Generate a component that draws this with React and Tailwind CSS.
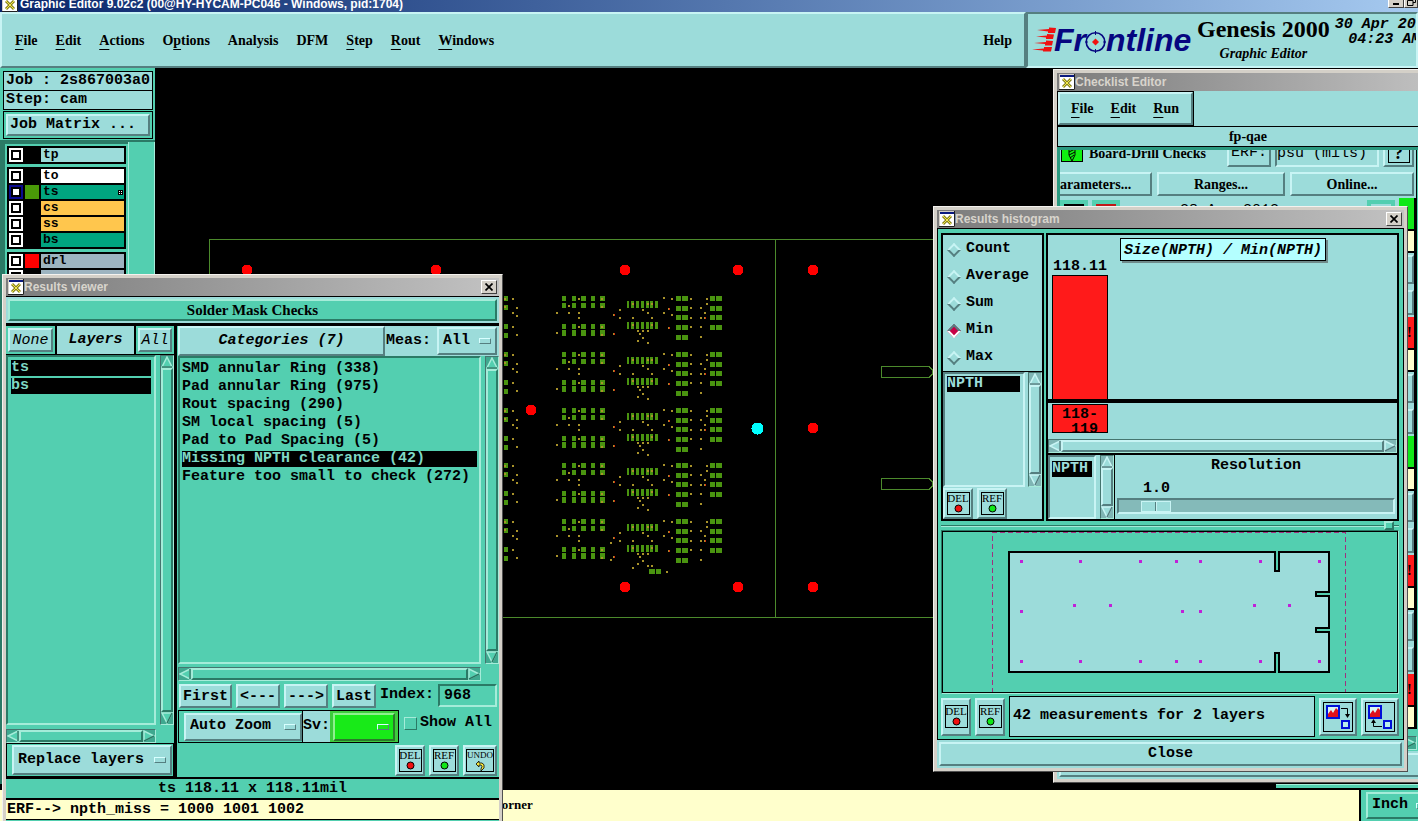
import React, { useState } from 'react';

const mono = "font-['Liberation_Mono','DejaVu_Sans_Mono',monospace]";
const serif = "font-['Liberation_Serif',serif]";
const sans = "font-['Liberation_Sans',sans-serif]";

// Motif style bevels
const raisedBlue = 'border-2 border-t-[#c8f4f4] border-l-[#c8f4f4] border-r-[#557f80] border-b-[#557f80] bg-[#9cdcda]';
const sunkenBlue = 'border-2 border-t-[#557f80] border-l-[#557f80] border-r-[#c8f4f4] border-b-[#c8f4f4] bg-[#9cdcda]';
const raisedGreen = 'border-2 border-t-[#a5ecd9] border-l-[#a5ecd9] border-r-[#2b7a66] border-b-[#2b7a66] bg-[#53cfb0]';
const sunkenGreen = 'border-2 border-t-[#2b7a66] border-l-[#2b7a66] border-r-[#a5ecd9] border-b-[#a5ecd9] bg-[#53cfb0]';

const mainMenu = [
  { label: 'File', at: 0 },
  { label: 'Edit', at: 0 },
  { label: 'Actions', at: 0 },
  { label: 'Options', at: 1 },
  { label: 'Analysis', at: -1 },
  { label: 'DFM', at: -1 },
  { label: 'Step', at: 0 },
  { label: 'Rout', at: 0 },
  { label: 'Windows', at: 0 },
];

const layerGroups = [
  [{ name: 'tp', bg: 'bg-[#9cdcda]', swatch: 'bg-black' }],
  [
    { name: 'to', bg: 'bg-white', swatch: 'bg-black' },
    { name: 'ts', bg: 'bg-[#00a580]', swatch: 'bg-[#4a9a08]', active: true },
    { name: 'cs', bg: 'bg-[#ffc64d]', swatch: 'bg-black' },
    { name: 'ss', bg: 'bg-[#ffc64d]', swatch: 'bg-black' },
    { name: 'bs', bg: 'bg-[#00a580]', swatch: 'bg-black' },
  ],
  [
    { name: 'drl', bg: 'bg-[#9db4c0]', swatch: 'bg-[#ff0000]' },
    { name: '', bg: 'bg-[#9db4c0]', swatch: 'bg-black' },
  ],
];

const categories = [
  'SMD annular Ring (338)',
  'Pad annular Ring (975)',
  'Rout spacing (290)',
  'SM local spacing (5)',
  'Pad to Pad Spacing (5)',
  'Missing NPTH clearance (42)',
  'Feature too small to check (272)',
];

const stats = ['Count', 'Average', 'Sum', 'Min', 'Max'];

// --- Datos del dibujo ---
const blockOffsets = [0, 56, 112, 167, 223];
const pads = [
  ...[[562, 4], [572, 4], [581, 5], [591, 4], [600, 5]].flatMap(([x, w]) => [
    [x, 296, w, 5], [x, 303, w, 5], [x, 324, w, 5], [x, 330, w, 6],
  ]),
  ...[[627, 2], [631, 3], [636, 3], [641, 3], [646, 3], [650, 3], [655, 3]].flatMap(([x, w]) => [
    [x, 301, w, 7], [x, 322, w, 7],
  ]),
  ...[296, 306, 315, 325, 335].flatMap((y) => [[676, y, 5, 5], [682, y, 6, 5]]),
  ...[296, 306, 315, 325].flatMap((y) => [[710, y, 5, 5], [716, y, 6, 5]]),
  [504, 296, 4, 5], [504, 305, 4, 5], [504, 324, 4, 5], [504, 333, 4, 5],
];
const vias = [
  [557, 313], [569, 306], [569, 313], [579, 299], [579, 313], [579, 318], [579, 327], [557, 333],
  [602, 299], [602, 307], [602, 327], [602, 335],
  [620, 310], [620, 318], [633, 318], [643, 310], [648, 313], [652, 318], [633, 304], [648, 304],
  [652, 304], [633, 325], [652, 325], [638, 331], [643, 331], [648, 331], [640, 334], [643, 338],
  [638, 341], [648, 343], [664, 298], [672, 299], [664, 313], [672, 315], [691, 299], [691, 308],
  [691, 318], [691, 327], [701, 308], [701, 318], [701, 327], [701, 337], [707, 299], [707, 304],
  [705, 313], [513, 299], [517, 308], [513, 313], [517, 316], [513, 327], [517, 335], [505, 299], [505, 307],
  [669, 309], [669, 328], [614, 315], [614, 334], [705, 318],
];
const hotVias = [[670, 309], [670, 328], [615, 315], [615, 334], [706, 318]];
const holes = [
  [247, 270], [436, 270], [625, 270], [738, 270], [813, 270], [531, 410],
  [813, 428], [625, 587], [738, 587], [813, 587],
];
const previewDots = [
  ...[1021, 1081, 1141, 1177, 1201, 1261, 1321].flatMap((x) => [[x, 561], [x, 661]]),
  [1021, 611], [1075, 605], [1111, 605], [1183, 611], [1201, 611], [1255, 605], [1291, 605],
];

const Mnemonic = ({ label, at }) => {
  if (at < 0) return label;
  return (
    <>
      {label.slice(0, at)}
      <span className="underline decoration-1 underline-offset-[4px]">{label[at]}</span>
      {label.slice(at + 1)}
    </>
  );
};

const XIcon = () => (
  <svg width="16" height="16" viewBox="0 0 16 16" className="shrink-0">
    <rect width="16" height="16" fill="#d4d0c8" />
    <rect x="1" y="1" width="14" height="14" fill="#fff" />
    <rect x="1" y="1" width="14" height="2" fill="#0a1a80" />
    <path d="M4 5L12 13M12 5L4 13" stroke="#8a8420" strokeWidth="3" />
    <path d="M4 5L12 13M12 5L4 13" stroke="#f2e94a" strokeWidth="1" />
    <path d="M0 15.5H15.5V0" fill="none" stroke="#222" />
  </svg>
);

const CloseBox = () => (
  <button aria-label="Close window" className="flex h-[14px] w-4 items-center justify-center border border-t-white border-l-white border-r-[#404040] border-b-[#404040] bg-[#d4d0c8]">
    <svg width="8" height="8" viewBox="0 0 8 8"><path d="M0.5 0.5L7.5 7.5M7.5 0.5L0.5 7.5" stroke="#000" strokeWidth="1.7" /></svg>
  </button>
);

const Win = ({ title, closable, place, children }) => (
  <section className={`absolute border border-t-[#f4f2ee] border-l-[#f4f2ee] border-r-[#505050] border-b-[#505050] bg-[#d4d0c8] p-[3px] ${place}`}>
    <header className={`flex h-[18px] items-center bg-linear-to-r from-[#7c7c7c] to-[#c2c2c2] pr-[2px] pl-[2px] ${sans}`}>
      <XIcon />
      <h2 className="flex-1 text-xs font-bold text-[#d8d4cc]">{title}</h2>
      {closable && <CloseBox />}
    </header>
    {children}
  </section>
);

const arrows = {
  up: 'M6 1L11 11H1Z',
  down: 'M6 11L1 1H11Z',
  left: 'M1 6L11 1V11Z',
  right: 'M11 6L1 1V11Z',
};
const arrowShade = {
  up: 'M11 11H1',
  down: 'M11 1L6 11',
  left: 'M11 1V11',
  right: 'M11 6L1 11',
};
const Arrow = ({ dir, green }) => (
  <svg width="12" height="12" viewBox="0 0 12 12" className="shrink-0">
    <path d={arrows[dir]} fill={green ? '#53cfb0' : '#9cdcda'} stroke={green ? '#a5ecd9' : '#c8f4f4'} strokeWidth="1.5" />
    <path d={arrowShade[dir]} stroke={green ? '#2b7a66' : '#557f80'} strokeWidth="1.5" />
  </svg>
);

const ScrollBar = ({ horizontal, green }) => (
  <div
    className={`flex shrink-0 ${horizontal ? 'h-[14px] flex-row' : 'w-[14px] flex-col'} border border-t-[#45756f] border-l-[#45756f] border-r-[#a5ecd9] border-b-[#a5ecd9] ${green ? 'bg-[#3fa88f]' : 'bg-[#7fb5b4]'}`}
  >
    <Arrow dir={horizontal ? 'left' : 'up'} green={green} />
    <div className={`flex-1 ${green ? raisedGreen : raisedBlue}`} />
    <Arrow dir={horizontal ? 'right' : 'down'} green={green} />
  </div>
);

const OptionMenu = ({ id, options, look, label }) => (
  <div className={`flex items-center gap-1 pr-1 pl-1 ${look}`}>
    <select id={id} aria-label={label} className="min-w-0 flex-1 appearance-none bg-transparent font-bold outline-none">
      {options.map((o) => <option key={o}>{o}</option>)}
    </select>
    <span className="h-[6px] w-3 shrink-0 border border-t-[#d8ffff] border-l-[#d8ffff] border-r-[#557f80] border-b-[#557f80]" />
  </div>
);

const UtilButton = ({ text, dot, size = 'h-[31px] w-[30px]' }) => (
  <button aria-label={text} className={`flex items-center justify-center ${raisedBlue} ${size}`}>
    <span className={`flex h-[23px] w-[23px] flex-col items-center border border-black text-[11px] leading-[11px] font-normal ${serif}`}>
      <span>{text}</span>
      <svg width="9" height="9" viewBox="0 0 9 9"><circle cx="4.5" cy="4.5" r="3.5" fill={dot} stroke="#000" /></svg>
    </span>
  </button>
);

const UndoButton = () => (
  <button aria-label="Undo" className={`flex h-[31px] w-[34px] items-center justify-center ${raisedBlue}`}>
    <span className={`flex h-[23px] w-[28px] flex-col items-center border border-black text-[9px] leading-[11px] font-normal ${serif}`}>
      <span>UNDO</span>
      <svg width="12" height="10" viewBox="0 0 12 10">
        <path d="M2 3L5 0V2H8Q11 3 10 7L7 10V8Q9 5 7 4H5V6Z" fill="#f5e63c" stroke="#000" strokeWidth="0.8" />
      </svg>
    </span>
  </button>
);

const ChartButton = ({ back }) => (
  <button aria-label={back ? 'Previous layer' : 'Next layer'} className={`flex h-[38px] w-[38px] items-center justify-center ${raisedBlue}`}>
    <svg width="30" height="30" viewBox="0 0 30 30">
      <rect x="0.5" y="0.5" width="29" height="29" fill="#9cdcda" stroke="#000" />
      <rect x="4" y="4" width="12" height="12" fill="#d8f4f4" stroke="#0010d8" strokeWidth="2" />
      <path d="M5 15V12L8 8L10 11L13 6L15 8V15Z" fill="#e0101c" />
      <rect x="19" y="19" width="7" height="7" fill="#b8ecec" stroke="#0010d8" strokeWidth="2" />
      {back ? (
        <>
          <path d="M17 24.5H8.5V19" fill="none" stroke="#000" />
          <path d="M8.5 17L11 21H6Z" />
        </>
      ) : (
        <>
          <path d="M18 6.5H24.5V13" fill="none" stroke="#000" />
          <path d="M24.5 16L27 12H22Z" />
        </>
      )}
    </svg>
  </button>
);

const Logo = () => (
  <svg width="160" height="38" viewBox="1032 22 160 38" className="shrink-0" role="img">
    <g fill="#f01010">
      <path d="M1037 30L1049 29V27.5L1056 28L1055 33H1048V31.5Z" />
      <path d="M1036 36.5L1047 35.5V34L1054 34.5L1053 39H1046V37.5Z" />
      <path d="M1034 43L1046 42V40.5L1053 41L1052 45.5H1045V44Z" />
      <path d="M1032 49.5L1044 48.5V47L1052 47L1051 51.5H1043V50.5Z" />
    </g>
    <g className={`${sans} text-[32px] font-bold italic`} fill="#060680">
      <text x="1054" y="51">Fr</text>
      <text x="1106" y="51">ntline</text>
    </g>
    <circle cx="1095.5" cy="42" r="9.3" fill="none" stroke="#060680" strokeWidth="1.6" />
    <path d="M1095.5 38.5L1099 42L1095.5 45.5L1092 42Z" fill="#f01010" />
    <path d="M1095.5 31V35M1095.5 49V53M1085 42H1088M1103 42H1106" stroke="#060680" strokeWidth="1" />
  </svg>
);

const BoardCanvas = () => (
  <svg className="h-full min-w-0 flex-1 bg-black" shapeRendering="crispEdges">
    {/* page coordinates, moved to the canvas corner */}
    <g transform="translate(-155 -68)">
      <g fill="none" stroke="#4c8a2c">
        <path d="M1300 239.5H209.5V617.5H1300" />
        <path d="M775.5 239.5V617.5" />
        <path d="M881.5 366.5H929L932.5 370V374L929 377.5H881.5Z" />
        <path d="M881.5 478.5H929L932.5 482V486L929 489.5H881.5Z" />
      </g>
      {blockOffsets.map((dy) => (
        <g key={dy} transform={`translate(0 ${dy})`}>
          {pads.map(([x, y, w, h]) => <rect key={`${x}-${y}`} x={x} y={y} width={w} height={h} fill="#4a9410" />)}
          {vias.map(([x, y]) => <rect key={`${x}-${y}`} x={x - 1} y={y - 1} width="2" height="2" fill="#a8922a" />)}
          {hotVias.map(([x, y]) => <rect key={`${x}-${y}`} x={x - 1} y={y - 1} width="1" height="2" fill="#d83010" />)}
        </g>
      ))}
      <path d="M649 569h6v5h-6zM656 569h5v5h-5z" fill="#4a9410" />
      <path d="M666 571h2v2h-2zM632 567h2v2h-2zM610 542h2v2h-2zM610 559h2v2h-2zM651 565h2v2h-2z" fill="#a8922a" />
      {holes.map(([x, y]) => <circle key={`${x}-${y}`} cx={x} cy={y} r="5.5" fill="#ff0000" />)}
      <circle cx="757.5" cy="428.5" r="6" fill="#00ffff" />
    </g>
  </svg>
);

const LayerPanel = () => (
  <aside className={`flex w-[155px] shrink-0 flex-col bg-[#53cfb0] pt-[3px] text-[15px] font-bold ${mono}`}>
    <div className="mr-[2px] ml-[3px] border border-black bg-[#9cdcda] pl-[2px] leading-[18px] whitespace-pre">Job : 2s867003a0</div>
    <div className="mr-[2px] ml-[3px] border border-t-0 border-black bg-[#9cdcda] pl-[2px] leading-[18px]">Step: cam</div>
    <div className="mt-[1px] mr-[2px] ml-[3px] border border-black p-[2px]">
      <button className={`block w-full pl-[2px] text-left leading-[18px] ${raisedBlue}`}>Job Matrix ...</button>
    </div>
    <div className="mt-[1px] flex min-h-0 flex-1 overflow-hidden border-t-2 border-[#2b7a66]">
      <div className="flex w-[128px] flex-col gap-[3px] border-t-2 border-l-[5px] border-[#2b7a66] p-[2px] text-[13px]">
        {layerGroups.map((group, i) => (
          <div key={i} className="flex flex-col bg-black pt-[2px]">
            {group.map((layer) => (
              <div key={layer.name} className="flex h-4 gap-[2px] px-[2px] pb-[2px]">
                <input
                  type="checkbox"
                  aria-label={layer.name || 'layer'}
                  className={`h-[14px] w-[14px] appearance-none border-2 bg-white ring-2 ring-black ring-inset ${layer.active ? 'border-[#0a0a90]' : 'border-white'}`}
                />
                <span className={`w-[14px] ${layer.swatch}`} />
                <button className={`flex flex-1 items-center justify-between pr-[1px] pl-[2px] leading-[14px] ${layer.bg}`}>
                  {layer.name}
                  {layer.active && (
                    <svg width="5" height="5" viewBox="0 0 5 5" shapeRendering="crispEdges">
                      <rect width="5" height="5" />
                      <path d="M1 1h1v1h-1zM3 1h1v1h-1zM1 3h1v1h-1zM3 3h1v1h-1z" fill="#fff" />
                    </svg>
                  )}
                </button>
              </div>
            ))}
          </div>
        ))}
      </div>
      <div className="flex-1 border-x border-[#a5ecd9]" />
    </div>
  </aside>
);

const ChecklistEditor = () => (
  <Win title="Checklist Editor" place="top-[69px] left-[1053px] w-[390px]">
    <div className={`flex h-[688px] flex-col bg-[#9cdcda] text-[14px] font-bold ${serif}`}>
      <nav className="w-[137px] border border-black">
        <div className={`flex h-[33px] items-center gap-[17px] pl-[11px] ${raisedBlue}`}>
          {['File', 'Edit', 'Run'].map((m) => <button key={m}><Mnemonic label={m} at={0} /></button>)}
        </div>
      </nav>
      <div className="border border-black text-center leading-[19px]">fp-qae</div>
      <div className="flex min-h-0 flex-1 overflow-hidden border-t-[3px] border-l-[3px] border-[#2b9a80] bg-[#53cfb0]">
        <div className="w-[357px] overflow-hidden border-r border-black bg-[#9cdcda]">
          <div className="flex h-[17px] items-end gap-1 overflow-hidden pr-[2px]">
            <div className="flex h-7 flex-1 items-center gap-[6px] pl-[1px]">
              <svg width="22" height="26" viewBox="0 0 22 26">
                <rect x="0.5" y="0.5" width="21" height="21" fill="#10f010" stroke="#000" />
                <path d="M8 8H14V15L11 21L8 15ZM8 12L14 9M8 15L14 12M9 18L13 15" fill="none" stroke="#000" />
              </svg>
              Board-Drill Checks
            </div>
            <button className={`h-7 w-11 text-[15px] font-normal ${mono} ${raisedBlue}`}>ERF:</button>
            <input aria-label="ERF" defaultValue="psu (mils)" className={`h-7 w-[104px] text-[15px] font-normal ${mono} ${sunkenBlue}`} />
            <button className={`flex h-7 w-[31px] justify-center pb-[2px] text-[18px] leading-[22px] ${raisedBlue}`}>
              <span className="w-[22px] border border-black">?</span>
            </button>
          </div>
          <div className="mt-[5px] flex h-6 gap-[5px] pr-[2px]">
            <button className={`w-[92px] border-l-0! text-left ${raisedBlue}`}>arameters...</button>
            <button className={`w-[128px] ${raisedBlue}`}>Ranges...</button>
            <button className={`flex-1 ${raisedBlue}`}>Online...</button>
          </div>
          <div className="mt-[2px] flex">
            <div className={`flex flex-1 items-start gap-1 pt-[2px] text-[15px] font-normal ${mono}`}>
              <span className="h-5 w-7 border-4 border-[#53cfb0] bg-black" />
              <span className="h-5 w-7 border-4 border-[#53cfb0] bg-[#c01818]" />
              <span className="ml-[56px] flex-1">28 Apr 2013</span>
              <span className="mr-1 h-5 w-7 border-4 border-[#53cfb0] bg-[#9cdcda]" />
            </div>
            <div className="w-[17px] border-r-2 border-black">
              {['ok', 'bad', 'ok', 'bad', 'bad'].map((s, i) => (
                <div key={i} className="flex flex-col">
                  <span className={`h-[33px] border-b-2 border-black pl-2 leading-8 ${s === 'ok' ? 'bg-[#10e818]' : 'bg-[#ff1a1a]'}`}>{s === 'bad' && '!'}</span>
                  <span className="h-[22px] border-b-2 border-black bg-[#ffffcc]" />
                  <span className={`mt-[2px] h-[29px] ${raisedBlue}`} />
                  <span className={`mt-[6px] mb-[2px] h-[25px] ${raisedBlue}`} />
                </div>
              ))}
            </div>
          </div>
        </div>
      </div>
      <div className="bg-[#53cfb0] pt-[7px] pb-[1px]">
        <div className="flex w-[360px] flex-col"><ScrollBar horizontal green /></div>
      </div>
      <div className="p-[2px]">
        <div className={`h-6 ${raisedBlue}`} />
      </div>
    </div>
  </Win>
);

const ResultsViewer = () => {
  const [selected, setSelected] = useState(5);

  return (
    <Win title="Results viewer" closable place="top-[274px] left-[2px] w-[501px]">
      <div className={`flex flex-col border-t border-black bg-[#53cfb0] text-[15px] font-bold ${mono}`}>
        <div className="border-b-3 border-black bg-[#9cdcda] p-[2px]">
          <h3 className={`text-center leading-[18px] ${serif} ${raisedGreen}`}>Solder Mask Checks</h3>
        </div>

        <div className="flex">
          {/* Capas */}
          <div className="flex w-[171px] shrink-0 flex-col border-r-3 border-black">
            <div className="flex h-[29px] items-stretch gap-[2px] border-b border-black bg-black">
              <div className="flex bg-[#53cfb0] p-[2px]"><button className={`w-[45px] font-normal italic ${raisedBlue}`}>None</button></div>
              <div className="flex flex-1 items-center justify-center bg-[#9cdcda] italic">Layers</div>
              <div className="flex bg-[#53cfb0] p-[2px]"><button className={`w-[34px] font-normal italic ${raisedBlue}`}>All</button></div>
            </div>
            <div className="flex h-[370px] gap-1">
              <ul className={`flex flex-1 flex-col gap-[2px] p-[3px] leading-4 ${sunkenGreen}`}>
                <li className="bg-black text-[#7fd8c4]">ts</li>
                <li className="bg-black text-[#7fd8c4]">bs</li>
              </ul>
              <ScrollBar green />
            </div>
            <div className="mt-1 mr-[18px] flex flex-col"><ScrollBar horizontal green /></div>
            <div className="border border-black py-[1px] pr-[1px] pl-[5px]">
              <OptionMenu label="Layer mode" options={['Replace layers']} look={`h-[30px] ${raisedBlue}`} />
            </div>
          </div>

          {/* Categorías */}
          <div className="flex min-w-0 flex-1 flex-col pl-[1px]">
            <div className="flex h-[30px]">
              <h3 className={`flex w-[207px] items-center justify-center italic ${raisedBlue}`}>Categories (7)</h3>
              <div className="flex flex-1 items-center justify-between bg-[#9cdcda] pr-[2px] pl-[1px]">
                <label htmlFor="meas">Meas:</label>
                <OptionMenu id="meas" options={['All']} look={`h-[28px] w-[60px] ${raisedBlue}`} />
              </div>
            </div>
            <div className="flex h-[308px] gap-1">
              <ul className={`flex-1 p-[2px] leading-[18px] ${sunkenGreen}`}>
                {categories.map((c, i) => (
                  <li
                    key={c}
                    onClick={() => setSelected(i)}
                    className={`whitespace-nowrap ${i === selected ? 'my-[1px] bg-black leading-4! text-[#7fd8c4]' : ''}`}
                  >
                    {c}
                  </li>
                ))}
              </ul>
              <ScrollBar green />
            </div>
            <div className="mt-[3px] mr-[18px] flex flex-col"><ScrollBar horizontal green /></div>
            <div className="flex h-[29px] items-center gap-1 pr-[2px] pl-[1px]">
              <button className={`h-6 w-[53px] ${raisedBlue}`}>First</button>
              <button className={`h-6 w-[44px] ${raisedBlue}`}>&lt;---</button>
              <button className={`h-6 w-[44px] ${raisedBlue}`}>---&gt;</button>
              <button className={`h-6 w-[44px] ${raisedBlue}`}>Last</button>
              <label htmlFor="idx">Index:</label>
              <input id="idx" defaultValue="968" className={`h-[23px] min-w-0 flex-1 pl-1 outline-none ${sunkenGreen}`} />
            </div>
            <div className="flex h-[33px] items-center">
              <div className="flex h-full items-center border border-r-0 border-black pl-[5px]">
                <OptionMenu label="Zoom" options={['Auto Zoom']} look={`h-[28px] w-[118px] ${raisedBlue}`} />
              </div>
              <label htmlFor="sv" className="flex h-full items-center border border-r-0 border-black bg-[#9cdcda]">Sv:</label>
              <div className="flex h-full items-center border border-l-0 border-black bg-[#3dcc3d] px-[3px]">
                <OptionMenu id="sv" options={['']} look="h-[28px] w-[62px] border-2 border-t-[#8ef08e] border-l-[#8ef08e] border-r-[#2b7a2b] border-b-[#2b7a2b] bg-[#18ea18]" />
              </div>
              <label className="flex items-center gap-[3px] self-start pt-[2px] pl-[5px]">
                <input type="checkbox" className="h-[13px] w-[13px] appearance-none border border-t-[#a5ecd9] border-l-[#a5ecd9] border-r-[#2b7a66] border-b-[#2b7a66]" />
                Show All
              </label>
            </div>
            <div className="flex flex-1 items-center justify-end gap-1 pr-[2px]">
              <UtilButton text="DEL" dot="#f01010" />
              <UtilButton text="REF" dot="#10e818" />
              <UndoButton />
            </div>
          </div>
        </div>

        <div className="border-y-2 border-black text-center leading-[19px]">ts 118.11 x 118.11mil</div>
        <div className="border-b border-black bg-[#ffffcc] pl-[1px] leading-[19px]">ERF--&gt; npth_miss = 1000 1001 1002</div>
        <div className="h-4" />
      </div>
    </Win>
  );
};

const ResultsHistogram = () => {
  const [stat, setStat] = useState('Min');
  const [resolution, setResolution] = useState(9);

  return (
    <Win title="Results histogram" closable place="top-[206px] left-[933px] w-[475px]">
      <div className={`text-[15px] font-bold ${mono}`}>
        <div className="border border-black bg-[#53cfb0] pt-1 pr-1 pb-[2px] pl-[3px]">
          <div className="flex h-[288px] gap-[2px]">
            <div className="flex w-[103px] shrink-0 flex-col border-2 border-black bg-[#9cdcda]">
              <div className="border-b border-black pt-[1px]">
                {stats.map((s) => (
                  <label key={s} className="flex h-[27px] items-center gap-[7px] pl-[6px]">
                    <input
                      type="radio"
                      name="stat"
                      checked={stat === s}
                      onChange={() => setStat(s)}
                      className="h-[10px] w-[10px] rotate-45 appearance-none border-2 border-t-[#c8f4f4] border-l-[#c8f4f4] border-r-[#557f80] border-b-[#557f80] checked:border-t-[#557f80] checked:border-l-[#557f80] checked:border-r-white checked:border-b-white checked:bg-[#c80046]"
                    />
                    {s}
                  </label>
                ))}
              </div>
              <div className="flex h-[115px] justify-between">
                <div className={`w-[82px] p-[2px] ${sunkenBlue}`}>
                  <div className="w-[73px] bg-black leading-4 text-[#9cdcda]">NPTH</div>
                </div>
                <ScrollBar />
              </div>
              <div className="flex flex-1 items-center gap-1">
                <UtilButton text="DEL" dot="#f01010" />
                <UtilButton text="REF" dot="#10e818" />
              </div>
            </div>

            <div className="flex min-w-0 flex-1 flex-col border-2 border-black bg-[#9cdcda]">
              <div className="relative flex h-[204px] flex-col">
                <div className="absolute top-[3px] left-[72px] border border-black bg-[#b4ffff] px-[3px] pt-[2px] leading-[19px] italic shadow-[2px_2px_0_#6f8a8a]">
                  Size(NPTH) / Min(NPTH)
                </div>
                <div className="flex flex-1 flex-col items-center justify-end self-start pl-1">
                  <span className="leading-4">118.11</span>
                  <span className="h-[124px] w-14 border border-b-0 border-black bg-[#ff1a1a]" />
                </div>
                <div className="h-1 bg-black" />
                <div className="mt-[1px] mb-[6px] ml-1 h-[29px] w-14 border border-black bg-[#ff1a1a] pt-[2px] pl-[9px] leading-[15px] whitespace-pre">{'118-\n 119'}</div>
              </div>
              <ScrollBar horizontal />
              <div className="flex flex-1 border-t-2 border-black">
                <div className={`w-[48px] px-[2px] py-1 ${sunkenBlue}`}>
                  <div className="bg-black leading-4 text-[#9cdcda]">NPTH</div>
                </div>
                <div className="ml-1 flex"><ScrollBar /></div>
                <div className="flex min-w-0 flex-1 flex-col border-l border-black px-[2px] pt-[2px]">
                  <label htmlFor="res" className="text-center leading-[18px]">Resolution</label>
                  <output className="pt-[5px] pl-[26px] leading-[18px]">1.0</output>
                  <input
                    id="res"
                    type="range"
                    value={resolution}
                    onChange={(e) => setResolution(e.target.value)}
                    className="h-[16px] w-full appearance-none border-2 border-t-[#557f80] border-l-[#557f80] border-r-[#c8f4f4] border-b-[#c8f4f4] bg-[#84bab9] [&::-webkit-slider-thumb]:h-[11px] [&::-webkit-slider-thumb]:w-[30px] [&::-webkit-slider-thumb]:appearance-none [&::-webkit-slider-thumb]:border [&::-webkit-slider-thumb]:border-[#c8f4f4] [&::-webkit-slider-thumb]:bg-[linear-gradient(90deg,#9cdcda_46%,#557f80_46%,#557f80_50%,#c8f4f4_50%,#c8f4f4_54%,#9cdcda_54%)]"
                  />
                </div>
              </div>
            </div>
          </div>

          <div className="flex h-[9px] items-center">
            <span className="h-[2px] flex-1 border-t border-b border-t-[#2b7a66] border-b-[#a5ecd9]" />
            <span className={`h-[9px] w-[10px] ${raisedGreen}`} />
            <span className="h-[2px] w-[5px] border-t border-b border-t-[#2b7a66] border-b-[#a5ecd9]" />
          </div>

          <div className="border border-t-[#2b7a66] border-l-[#2b7a66] border-r-[#a5ecd9] border-b-[#a5ecd9]">
            <svg className="h-[162px] w-full border border-black" viewBox="943 532 456 160" shapeRendering="crispEdges">
              <path d="M992.5 693V532.5H1347.5V693" fill="none" stroke="#a03080" strokeDasharray="5 3" />
              <path
                d="M1009 552H1276V571H1280V552H1331V592H1318V596H1331V628H1318V632H1331V672H1280V653H1276V672H1009Z"
                fill="#9cdcda"
                stroke="#000"
                strokeWidth="2"
              />
              {previewDots.map(([x, y]) => <rect key={`${x}-${y}`} x={x - 1} y={y - 1} width="3" height="3" fill="#c020d8" />)}
            </svg>
          </div>

          <div className="mt-[2px] flex items-center gap-1">
            <UtilButton text="DEL" dot="#f01010" size="h-[38px] w-[30px]" />
            <UtilButton text="REF" dot="#10e818" size="h-[38px] w-[30px]" />
            <p className="flex h-[41px] flex-1 items-center border border-black bg-[#9cdcda] pl-[3px]">42 measurements for 2 layers</p>
            <ChartButton />
            <ChartButton back />
          </div>
        </div>
        <div className="bg-[#9cdcda] p-[2px]">
          <button className={`block w-full leading-5 ${raisedBlue}`}>Close</button>
        </div>
      </div>
    </Win>
  );
};

const App = () => (
  <div className="relative flex h-screen flex-col overflow-hidden bg-black text-black">
    <header className={`flex h-3 shrink-0 items-end justify-between overflow-hidden bg-linear-to-r from-[#0a246a] to-[#a6caf0] pl-[2px] ${sans}`}>
      <div className="flex items-end gap-[2px]">
        <XIcon />
        <h1 className="text-xs leading-4 font-bold text-white">Graphic Editor 9.02c2 (00@HY-HYCAM-PC046 - Windows, pid:1704)</h1>
      </div>
      <div className="flex pb-1">
        <button aria-label="Minimize" className="flex h-[14px] w-4 items-end justify-center border border-t-white border-l-white border-r-[#404040] border-b-[#404040] bg-[#d4d0c8] pb-[2px]">
          <span className="h-[2px] w-[6px] bg-black" />
        </button>
        <button aria-label="Restore" className="flex h-[14px] w-[14px] items-end justify-center border border-t-white border-l-white border-r-[#404040] border-b-[#404040] bg-[#d4d0c8] pb-[1px]">
          <svg width="9" height="9" viewBox="0 0 9 9"><path d="M3 3V0.5H8.5V5.5H6M0.5 3.5H6V8.5H0.5Z" fill="none" stroke="#000" /></svg>
        </button>
      </div>
    </header>

    <div className={`flex h-14 shrink-0 bg-[#9cdcda] text-[14px] font-bold ${serif}`}>
      <nav className={`flex flex-1 items-center gap-[18px] pr-3 pl-[13px] ${raisedBlue}`}>
        {mainMenu.map((m) => <button key={m.label}><Mnemonic label={m.label} at={m.at} /></button>)}
        <button className="ml-auto">Help</button>
      </nav>
      <div className="flex w-[392px] shrink-0 items-start gap-[5px] overflow-hidden border-2 border-t-[#557f80] border-l-[#557f80] border-r-[#c8f4f4] border-b-[#c8f4f4] pt-[3px] pl-1">
        <div className="pt-[5px]"><Logo /></div>
        <div className="flex flex-col items-center">
          <span className="text-2xl leading-6 whitespace-nowrap">Genesis 2000</span>
          <span className="pt-[3px] leading-5 italic">Graphic Editor</span>
        </div>
        <time className={`text-center text-[15px] leading-[15px] whitespace-nowrap italic ${mono}`}>30 Apr 2013<br />04:23 AM</time>
      </div>
    </div>

    <main className="flex min-h-0 flex-1">
      <LayerPanel />
      <BoardCanvas />
    </main>
    <div className="flex h-[6px] shrink-0 justify-end">
      <span className="h-1 w-[142px] border-t border-[#a5ecd9] bg-[#53cfb0]" />
    </div>

    <footer className="flex h-[31px] shrink-0 bg-[#ffffcc]">
      <p className={`flex-1 pl-[496px] text-[13px] leading-[30px] font-bold ${serif}`}>corner</p>
      <div className={`flex w-[59px] border-l-2 border-black bg-[#53cfb0] py-[2px] pl-[5px] text-[15px] ${mono}`}>
        <OptionMenu label="Units" options={['Inch']} look={`w-[68px] shrink-0 ${raisedGreen}`} />
      </div>
    </footer>

    <ChecklistEditor />
    <ResultsViewer />
    <ResultsHistogram />
  </div>
);

export default App;
